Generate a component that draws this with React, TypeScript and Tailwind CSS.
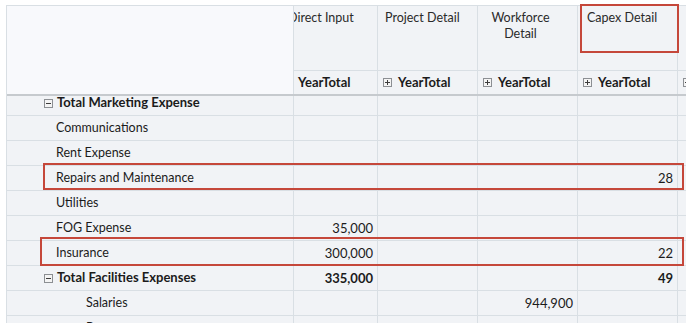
import type { ReactNode } from "react";

type Row = {
	label: string;
	level: "total" | "child" | "grand";
	vals: [string, string, string, string];
};

const rows: Row[] = [
	{ label: "Total Marketing Expense", level: "total", vals: ["", "", "", ""] },
	{ label: "Communications", level: "child", vals: ["", "", "", ""] },
	{ label: "Rent Expense", level: "child", vals: ["", "", "", ""] },
	{ label: "Repairs and Maintenance", level: "child", vals: ["", "", "", "28"] },
	{ label: "Utilities", level: "child", vals: ["", "", "", ""] },
	{ label: "FOG Expense", level: "child", vals: ["35,000", "", "", ""] },
	{ label: "Insurance", level: "child", vals: ["300,000", "", "", "22"] },
	{ label: "Total Facilities Expenses", level: "total", vals: ["335,000", "", "", "49"] },
	{ label: "Salaries", level: "grand", vals: ["", "", "944,900", ""] },
	{ label: "Bonus", level: "grand", vals: ["", "", "", ""] },
];

function Toggle({ open }: { open: boolean }) {
	return (
		<svg width="9" height="9" viewBox="0 0 9 9" className="shrink-0">
			<rect x="0.5" y="0.5" width="8" height="8" fill="#f4f4f4" stroke="#8c8f93" />
			<path d="M2 4.5h5" stroke="#3d3d3d" />
			{!open && <path d="M4.5 2v5" stroke="#3d3d3d" />}
		</svg>
	);
}

// frozen row-header cell + scrolled data cells, data pane shifted 16px left
function Line({ left, children, className }: { left: ReactNode; children: ReactNode; className?: string }) {
	return (
		<div className={`flex shrink-0 ${className ?? ""}`}>
			<div className="w-[287px] shrink-0 border-r border-[#d9dfe4]">{left}</div>
			<div className="min-w-0 flex-1 overflow-hidden">
				<div className="-ml-[16px] flex h-full">{children}</div>
			</div>
		</div>
	);
}

export default function App() {
	return (
		<div className="relative h-[323px] w-[686px] overflow-hidden bg-white font-['Lato',sans-serif] text-[13px] text-[#1b1b1b]">
			<div className="ml-[6px] mt-[5px] flex h-[318px] flex-col border-l border-t border-[#d9dfe4]">
				{/* column headers */}
				<div className="flex h-[90px] shrink-0 border-b-2 border-[#c6cace]">
					<div className="w-[287px] shrink-0 border-r border-[#d9dfe4] bg-[#f8f9fc]" />
					<div className="min-w-0 flex-1 overflow-hidden bg-[#f1f3f6]">
						<div className="-ml-[16px] flex flex-col">
							<div className="flex h-[65px] border-b border-[#d9dfe4] text-[12.5px] leading-[16px] text-[#2a2a2a]">
								<div className="w-[100px] shrink-0 whitespace-nowrap border-r border-[#d9dfe4] pl-[10px] pt-[4px]">
									Direct Input
								</div>
								<div className="w-[100px] shrink-0 border-r border-[#d9dfe4] pl-[7px] pt-[4px]">
									Project Detail
								</div>
								<div className="w-[100px] shrink-0 border-r border-[#d9dfe4] pl-[6px] pr-[20px] pt-[4px] text-center">
									Workforce
									<br />
									Detail
								</div>
								<div className="w-[100px] shrink-0 border-r border-[#d9dfe4] pl-[9px] pt-[4px]">
									Capex Detail
								</div>
								<div className="w-[100px] shrink-0" />
							</div>
							<div className="flex h-[23px] font-bold">
								{[0, 1, 2, 3, 4].map((i) => (
									<div
										key={i}
										className="flex w-[100px] shrink-0 items-center gap-[6px] border-r border-[#d9dfe4] pl-[5px]"
									>
										<Toggle open={false} />
										<span>YearTotal</span>
									</div>
								))}
							</div>
						</div>
					</div>
				</div>

				{/* body */}
				<div className="min-h-0 flex-1 overflow-hidden bg-[#f1f3f6]">
					<div className="-mt-[5px] flex flex-col">
						{rows.map((r) => (
							<Line
								key={r.label}
								className={`h-[25px] border-b border-[#d9dfe4] ${r.level === "total" ? "font-bold" : ""}`}
								left={
									<div
										className={`flex h-full items-center whitespace-nowrap ${
											r.level === "total"
												? "gap-[4px] pl-[37px]"
												: r.level === "child"
													? "pl-[49px] text-[12.5px]"
													: "pl-[79px] text-[12.5px]"
										}`}
									>
										{r.level === "total" && <Toggle open />}
										<span>{r.label}</span>
									</div>
								}
							>
								{r.vals.map((v, i) => (
									<div
										key={i}
										className="w-[100px] shrink-0 border-r border-[#d9dfe4] pr-[4px] text-right leading-[24px]"
									>
										{v}
									</div>
								))}
								<div className="w-[100px] shrink-0 border-r border-[#d9dfe4]" />
							</Line>
						))}
					</div>
				</div>
			</div>

			{/* highlight annotations */}
			<div className="absolute left-[580px] top-[4px] h-[49px] w-[99px] border-2 border-[#c5473a]" />
			<div className="absolute left-[43px] top-[163px] h-[27px] w-[641px] border-2 border-[#c5473a]" />
			<div className="absolute left-[40px] top-[237px] h-[29px] w-[644px] border-2 border-[#c5473a]" />
		</div>
	);
}
